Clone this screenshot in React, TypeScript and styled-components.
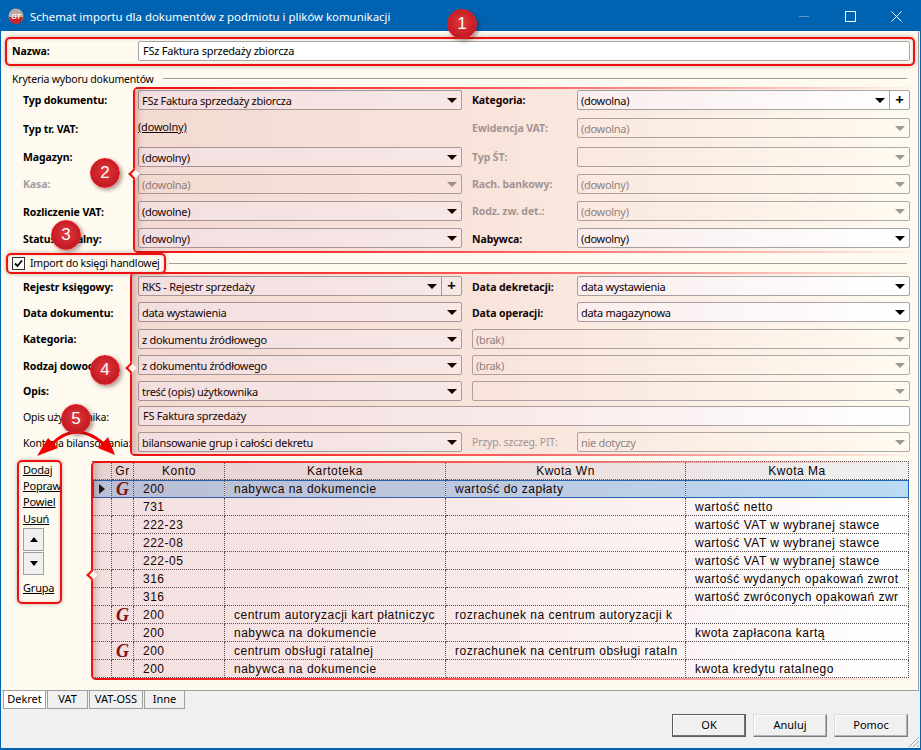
import React from "react";
import styled, { createGlobalStyle } from "styled-components";

const Global = createGlobalStyle`
  html, body { margin: 0; padding: 0; background: #f0f0f0; }
  body { overflow: hidden; }
  * { box-sizing: border-box; }
`;

const Win = styled.div`
  position: relative;
  width: 921px;
  height: 750px;
  display: flex;
  flex-direction: column;
  background: #f0f0f0;
  border: 1px solid #0063b1;
  border-bottom-width: 2px;
  font-family: "Noto Sans", "Liberation Sans", sans-serif;
  font-size: 11px;
  color: #000;
  overflow: hidden;
`;
const TitleBar = styled.div`
  height: 30px;
  flex: none;
  background: #0063b1;
  color: #fff;
  display: flex;
  align-items: center;
  padding: 0 1px 0 7px;
  font-size: 11.4px;
`;
const TitleText = styled.div`
  margin-left: 6px;
  flex: 1;
`;
const WinBtn = styled.div`
  width: 46px;
  height: 30px;
  display: flex;
  align-items: center;
  justify-content: center;
`;
const Panel = styled.div`
  height: 660px;
  flex: none;
  margin-left: 1px;
  margin-right: 1px;
  background: #fffaf0;
  border-bottom: 1px solid #a0a0a0;
  border-right: 1px solid #a0a0a0;
  padding-top: 10px;
`;
const Row = styled.div<{ $h: number }>`
  height: ${(p) => p.$h}px;
  display: grid;
  grid-template-columns: 115px 324px 10px 105px 333px;
  padding-left: 21px;
  align-items: start;
`;
const NameRow = styled.div`
  height: 26px;
  display: grid;
  grid-template-columns: 126px 772px;
  padding-left: 10px;
  align-items: start;
`;
const Label = styled.div<{ $bold?: boolean; $off?: boolean; $dy?: number }>`
  font-weight: ${(p) => (p.$bold ? 700 : 400)};
  color: ${(p) => (p.$off ? "#a0a0a0" : "#000")};
  line-height: 20px;
  padding-top: ${(p) => p.$dy ?? 0}px;
  white-space: nowrap;
  font-size: 10.5px;
  letter-spacing: ${(p) => (p.$bold ? "-0.1px" : "-0.2px")};
`;
const Gap = styled.div``;
const Input = styled.div<{ $span?: boolean }>`
  height: 20px;
  ${(p) => (p.$span ? "grid-column: 2 / 6;" : "")}
  background: #fff;
  border: 1px solid #a6a6a6;
  border-radius: 2px;
  padding-left: 4px;
  line-height: 17px;
  letter-spacing: -0.25px;
  white-space: nowrap;
`;
const Select = styled.div<{ $off?: boolean; $from4?: boolean }>`
  height: 20px;
  ${(p) => (p.$from4 ? "grid-column: 4 / 6;" : "")}
  background: ${(p) => (p.$off ? "transparent" : "#fff")};
  border: 1px solid ${(p) => (p.$off ? "#ababab" : "#a6a6a6")};
  border-radius: 2px;
  color: ${(p) => (p.$off ? "#8a8a8a" : "#000")};
  display: flex;
  align-items: center;
  padding-left: 3px;
  line-height: 17px;
  letter-spacing: -0.3px;
  white-space: nowrap;
`;
const SelectText = styled.span`
  flex: 1;
`;
const Arrow = styled.i<{ $off?: boolean }>`
  flex: none;
  width: 0;
  height: 0;
  margin-right: 4px;
  margin-left: 4px;
  border-left: 5px solid transparent;
  border-right: 5px solid transparent;
  border-top: 5px solid ${(p) => (p.$off ? "#9a9a9a" : "#000")};
`;
const Plus = styled.span`
  flex: none;
  width: 20px;
  height: 18px;
  border-left: 1px solid #a6a6a6;
  text-align: center;
  font-weight: 700;
  font-size: 15px;
  line-height: 16px;
`;
const LinkValue = styled.div`
  text-decoration: underline;
  line-height: 18px;
  letter-spacing: -0.2px;
`;
const SectionRow = styled.div<{ $h: number }>`
  height: ${(p) => p.$h}px;
  display: flex;
  align-items: center;
  padding: 0 11px 0 10px;
  gap: 9px;
  white-space: nowrap;
  font-size: 10.5px;
  letter-spacing: -0.2px;
`;
const SectionLine = styled.div`
  flex: 1;
  height: 1px;
  background: #a0a0a0;
`;
const Check = styled.span`
  width: 13px;
  height: 13px;
  flex: none;
  border: 1px solid #333;
  background: #fff;
  display: flex;
  align-items: center;
  justify-content: center;
  margin-right: -4px;
`;
const Lower = styled.div`
  display: flex;
  margin-top: 9px;
  padding-left: 21px;
`;
const Side = styled.div`
  width: 69px;
  padding-top: 1px;
  display: flex;
  flex-direction: column;
  align-items: flex-start;
  letter-spacing: -0.2px;
`;
const SideLink = styled.a<{ $mt?: number }>`
  text-decoration: underline;
  height: 16px;
  line-height: 16px;
  color: #000;
  margin-top: ${(p) => p.$mt ?? 0}px;
`;
const MoveBtn = styled.div`
  width: 21px;
  height: 23px;
  background: #f0f0f0;
  border: 1px solid #a0a0a0;
  display: flex;
  align-items: center;
  justify-content: center;
  margin-top: 1px;
`;
const Up = styled.i`
  width: 0; height: 0;
  border-left: 4px solid transparent;
  border-right: 4px solid transparent;
  border-bottom: 5px solid #000;
`;
const Down = styled.i`
  width: 0; height: 0;
  border-left: 4px solid transparent;
  border-right: 4px solid transparent;
  border-top: 5px solid #000;
`;
const Table = styled.table`
  width: 816px;
  height: 216px;
  table-layout: fixed;
  border-collapse: collapse;
  background: #fff;
  font-family: "Liberation Sans", sans-serif;
  font-size: 12px;
  letter-spacing: 0.5px;
`;
const Th = styled.th<{ $w: number }>`
  width: ${(p) => p.$w}px;
  height: 18px;
  font-weight: 400;
  background: #f0f0f0;
  border: 1px dotted #555;
  padding: 0;
  text-align: center;
`;
const Tr = styled.tr<{ $sel?: boolean }>`
  background: ${(p) => (p.$sel ? "#bcdbf4" : "transparent")};
  ${(p) => (p.$sel ? "outline: 1px solid #1a66b8; outline-offset: -1px;" : "")}
`;
const Td = styled.td`
  height: 18px;
  border: 1px dotted #555;
  padding: 0 0 0 9px;
  white-space: nowrap;
  overflow: hidden;
`;
const IconTd = styled.td`
  height: 18px;
  border: 1px dotted #555;
  padding: 0;
  text-align: center;
`;
const Gee = styled.span`
  font-family: "Liberation Serif", serif;
  font-style: italic;
  font-weight: 700;
  font-size: 18px;
  line-height: 16px;
  letter-spacing: 0;
  color: #7d1216;
  display: block;
`;
const Pointer = styled.i`
  display: block;
  width: 0; height: 0;
  margin-left: 6px;
  border-top: 5px solid transparent;
  border-bottom: 5px solid transparent;
  border-left: 6px solid #111;
`;
const Tabs = styled.div`
  display: flex;
  height: 18px;
  flex: none;
  padding-left: 2px;
  gap: 1px;
`;
const Tab = styled.div<{ $w: number; $active?: boolean }>`
  width: ${(p) => p.$w}px;
  background: ${(p) => (p.$active ? "#fff" : "#f0f0f0")};
  border: 1px solid #a0a0a0;
  border-top: none;
  text-align: center;
  line-height: 16px;
`;
const Footer = styled.div`
  flex: 1;
  display: flex;
  justify-content: flex-end;
  gap: 7px;
  padding: 5px 12px 0 0;
  position: relative;
`;
const Btn = styled.div<{ $def?: boolean }>`
  width: 74px;
  height: 23px;
  background: #f0f0f0;
  border: 1px solid;
  border-color: ${(p) => (p.$def ? "#5c5c5c" : "#dcdcdc #7c7c7c #7c7c7c #dcdcdc")};
  box-shadow: inset -1px -1px 0 ${(p) => (p.$def ? "#707070" : "#b4b4b4")}, inset 1px 1px 0 #fff;
  text-align: center;
  line-height: 20px;
`;
const Grip = styled.svg`
  position: absolute;
  right: 0;
  bottom: 0;
`;

/* Annotations lying over the dialog */
const Mark = styled.div<{ $x: number; $y: number; $w: number; $h: number }>`
  position: absolute;
  left: ${(p) => p.$x - 1}px;
  top: ${(p) => p.$y - 1}px;
  width: ${(p) => p.$w}px;
  height: ${(p) => p.$h}px;
  pointer-events: none;
`;
const FadeBox = styled(Mark)`
  border-left: 2px solid #f01010;
  border-radius: 5px 0 0 5px;
  box-shadow: inset 7px 0 6px -4px rgba(110, 40, 40, 0.25);
  background:
    linear-gradient(to right, #f01010 0%, #ff5a5a 45%, rgba(255, 120, 120, 0) 100%) top left / 100% 2px no-repeat,
    linear-gradient(to right, #f01010 0%, #ff5a5a 45%, rgba(255, 120, 120, 0) 100%) bottom left / 100% 2px no-repeat,
    linear-gradient(to right, rgba(170, 30, 30, 0.145) 0%, rgba(190, 40, 40, 0.105) 45%, rgba(200, 60, 60, 0) 100%);
  &::before {
    content: "";
    position: absolute;
    left: -5px;
    top: 50%;
    width: 6px;
    height: 6px;
    border-left: 2px solid #f01010;
    border-bottom: 2px solid #f01010;
    transform: rotate(45deg);
    background: #fffaf0;
  }
`;
const LineBox = styled(Mark)`
  border: 2px solid #f01010;
  border-radius: 5px;
  box-shadow: 0 0 4px rgba(90, 40, 20, 0.35), inset 0 0 3px rgba(90, 40, 20, 0.25);
`;
const Badge = styled.div<{ $x: number; $y: number }>`
  position: absolute;
  left: ${(p) => p.$x - 16}px;
  top: ${(p) => p.$y - 16}px;
  width: 30px;
  height: 30px;
  border-radius: 50%;
  background: radial-gradient(circle at 50% 45%, #e23a3a 0%, #c81e28 60%, #a81424 100%);
  border: 1px solid #ee1c1c;
  box-shadow: 2px 2px 4px rgba(60, 20, 20, 0.45);
  color: #fff;
  font-family: "Liberation Sans", sans-serif;
  font-size: 17px;
  text-align: center;
  line-height: 28px;
`;
const ArrowSvg = styled.svg`
  position: absolute;
  left: 19px;
  top: 419px;
  pointer-events: none;
`;

const Sel = ({ t, off, plus }: { t: string; off?: boolean; plus?: boolean }) => (
  <Select $off={off}>
    <SelectText>{t}</SelectText>
    <Arrow $off={off} />
    {plus ? <Plus>+</Plus> : null}
  </Select>
);

const SelWide = ({ t }: { t: string }) => (
  <Select $off $from4>
    <SelectText>{t}</SelectText>
    <Arrow $off />
  </Select>
);

const rows: [boolean, string, string, string, string][] = [
  [true, "200", "nabywca na dokumencie", "wartość do zapłaty", ""],
  [false, "731", "", "", "wartość netto"],
  [false, "222-23", "", "", "wartość VAT w wybranej stawce"],
  [false, "222-08", "", "", "wartość VAT w wybranej stawce"],
  [false, "222-05", "", "", "wartość VAT w wybranej stawce"],
  [false, "316", "", "", "wartość wydanych opakowań zwrot"],
  [false, "316", "", "", "wartość zwróconych opakowań zwr"],
  [true, "200", "centrum autoryzacji kart płatniczyc", "rozrachunek na centrum autoryzacji k", ""],
  [false, "200", "nabywca na dokumencie", "", "kwota zapłacona kartą"],
  [true, "200", "centrum obsługi ratalnej", "rozrachunek na centrum obsługi rataln", ""],
  [false, "200", "nabywca na dokumencie", "", "kwota kredytu ratalnego"],
];

export default function App() {
  return (
    <Win>
      <Global />
      <TitleBar>
        <svg width="16" height="16" viewBox="0 0 16 16">
          <circle cx="8" cy="8" r="7.5" fill="#b8a9a6" />
          <path d="M1 9a7 7 0 0 0 14 0z" fill="#c8242a" />
          <text x="8" y="11" textAnchor="middle" fontSize="7" fontWeight="700" fontStyle="italic" fill="#fff" fontFamily="Liberation Sans">GT</text>
        </svg>
        <TitleText>Schemat importu dla dokumentów z podmiotu i plików komunikacji</TitleText>
        <WinBtn>
          <svg width="11" height="11"><path d="M0 5.5h10" stroke="#5f97c9" /></svg>
        </WinBtn>
        <WinBtn>
          <svg width="11" height="11"><rect x="0.5" y="0.5" width="10" height="10" fill="none" stroke="#fff" /></svg>
        </WinBtn>
        <WinBtn>
          <svg width="11" height="11"><path d="M0.5 0.5l10 10M10.5 0.5l-10 10" stroke="#fff" /></svg>
        </WinBtn>
      </TitleBar>
      <Panel>
        <NameRow>
          <Label $bold>Nazwa:</Label>
          <Input>FSz Faktura sprzedaży zbiorcza</Input>
        </NameRow>
        <SectionRow $h={23}>
          <span>Kryteria wyboru dokumentów</span>
          <SectionLine />
        </SectionRow>
        <Row $h={28}>
          <Label $bold>Typ dokumentu:</Label>
          <Sel t="FSz Faktura sprzedaży zbiorcza" />
          <Gap />
          <Label $bold>Kategoria:</Label>
          <Sel t="(dowolna)" plus />
        </Row>
        <Row $h={29}>
          <Label $bold $dy={1}>Typ tr. VAT:</Label>
          <LinkValue>(dowolny)</LinkValue>
          <Gap />
          <Label $bold $off>Ewidencja VAT:</Label>
          <Sel t="(dowolna)" off />
        </Row>
        <Row $h={27}>
          <Label $bold>Magazyn:</Label>
          <Sel t="(dowolny)" />
          <Gap />
          <Label $bold $off>Typ ŚT:</Label>
          <Sel t="" off />
        </Row>
        <Row $h={27}>
          <Label $bold $off>Kasa:</Label>
          <Sel t="(dowolna)" off />
          <Gap />
          <Label $bold $off>Rach. bankowy:</Label>
          <Sel t="(dowolny)" off />
        </Row>
        <Row $h={27}>
          <Label $bold $dy={1}>Rozliczenie VAT:</Label>
          <Sel t="(dowolne)" />
          <Gap />
          <Label $bold $off>Rodz. zw. det.:</Label>
          <Sel t="(dowolny)" off />
        </Row>
        <Row $h={22}>
          <Label $bold $dy={1}>Status fiskalny:</Label>
          <Sel t="(dowolny)" />
          <Gap />
          <Label $bold $dy={1}>Nabywca:</Label>
          <Sel t="(dowolny)" />
        </Row>
        <SectionRow $h={26}>
          <Check>
            <svg width="9" height="9" viewBox="0 0 9 9"><path d="M1 4.5l2.5 2.5L8 1.5" fill="none" stroke="#000" strokeWidth="1.8" /></svg>
          </Check>
          <span>Import do księgi handlowej</span>
          <SectionLine />
        </SectionRow>
        <Row $h={26}>
          <Label $bold $dy={1}>Rejestr księgowy:</Label>
          <Sel t="RKS - Rejestr sprzedaży" plus />
          <Gap />
          <Label $bold $dy={1}>Data dekretacji:</Label>
          <Sel t="data wystawienia" />
        </Row>
        <Row $h={27}>
          <Label $bold $dy={1}>Data dokumentu:</Label>
          <Sel t="data wystawienia" />
          <Gap />
          <Label $bold $dy={1}>Data operacji:</Label>
          <Sel t="data magazynowa" />
        </Row>
        <Row $h={26}>
          <Label $bold>Kategoria:</Label>
          <Sel t="z dokumentu źródłowego" />
          <Gap />
          <SelWide t="(brak)" />
        </Row>
        <Row $h={26}>
          <Label $bold $dy={1}>Rodzaj dowodu:</Label>
          <Sel t="z dokumentu źródłowego" />
          <Gap />
          <SelWide t="(brak)" />
        </Row>
        <Row $h={25}>
          <Label $bold>Opis:</Label>
          <Sel t="treść (opis) użytkownika" />
          <Gap />
          <SelWide t="" />
        </Row>
        <Row $h={26}>
          <Label $dy={1}>Opis użytkownika:</Label>
          <Input $span>FS Faktura sprzedaży</Input>
        </Row>
        <Row $h={20}>
          <Label $dy={1}>Kontrola bilansowania:</Label>
          <Sel t="bilansowanie grup i całości dekretu" />
          <Gap />
          <Label $off>Przyp. szczeg. PIT:</Label>
          <Sel t="nie dotyczy" off />
        </Row>
        <Lower>
          <Side>
            <SideLink>Dodaj</SideLink>
            <SideLink>Popraw</SideLink>
            <SideLink>Powiel</SideLink>
            <SideLink $mt={1}>Usuń</SideLink>
            <MoveBtn><Up /></MoveBtn>
            <MoveBtn><Down /></MoveBtn>
            <SideLink $mt={5}>Grupa</SideLink>
          </Side>
          <Table>
            <thead>
              <tr>
                <Th $w={19} />
                <Th $w={22}>Gr</Th>
                <Th $w={91}>Konto</Th>
                <Th $w={221}>Kartoteka</Th>
                <Th $w={240}>Kwota Wn</Th>
                <Th $w={223}>Kwota Ma</Th>
              </tr>
            </thead>
            <tbody>
              {rows.map((r, i) => (
                <Tr key={i} $sel={i === 0}>
                  <IconTd>{i === 0 ? <Pointer /> : null}</IconTd>
                  <IconTd>{r[0] ? <Gee>G</Gee> : null}</IconTd>
                  <Td>{r[1]}</Td>
                  <Td>{r[2]}</Td>
                  <Td>{r[3]}</Td>
                  <Td>{r[4]}</Td>
                </Tr>
              ))}
            </tbody>
          </Table>
        </Lower>
      </Panel>
      <Tabs>
        <Tab $w={43} $active>Dekret</Tab>
        <Tab $w={41}>VAT</Tab>
        <Tab $w={54}>VAT-OSS</Tab>
        <Tab $w={41}>Inne</Tab>
      </Tabs>
      <Footer>
        <Btn $def>OK</Btn>
        <Btn>Anuluj</Btn>
        <Btn>Pomoc</Btn>
        <Grip width="13" height="13" viewBox="0 0 13 13">
          <path d="M12 2L2 12M12 6l-6 6M12 10l-2 2" stroke="#a8a8a8" />
        </Grip>
      </Footer>

      <LineBox $x={5} $y={37} $w={910} $h={29} />
      <FadeBox $x={133} $y={87} $w={782} $h={166} />
      <LineBox $x={6} $y={253} $w={160} $h={21} />
      <FadeBox $x={130} $y={272} $w={785} $h={184} />
      <LineBox $x={17} $y={460} $w={45} $h={144} />
      <FadeBox $x={91} $y={461} $w={824} $h={219} />
      <ArrowSvg width="110" height="40" viewBox="0 0 110 40">
        <path d="M32 24Q56 0 84 24" fill="none" stroke="#f00000" strokeWidth="3" />
        <path d="M17 36l11-18 10 10z" fill="#f00000" />
        <path d="M95 35l-17-7 10-11z" fill="#f00000" />
      </ArrowSvg>
      <Badge $x={462} $y={24}>1</Badge>
      <Badge $x={105} $y={173}>2</Badge>
      <Badge $x={66} $y={235}>3</Badge>
      <Badge $x={105} $y={370}>4</Badge>
      <Badge $x={76} $y={419}>5</Badge>
    </Win>
  );
}
